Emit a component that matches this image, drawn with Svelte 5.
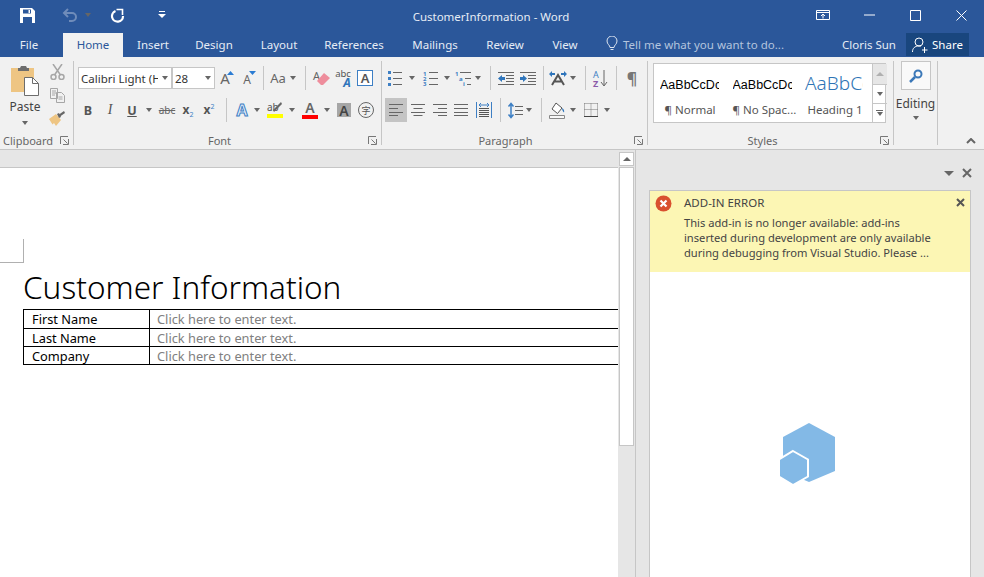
<script>
	const tabs = [
		{ label: 'Insert', cls: 'w60' },
		{ label: 'Design', cls: 'w62' },
		{ label: 'Layout', cls: 'w68' },
		{ label: 'References', cls: 'w82' },
		{ label: 'Mailings', cls: 'w80' },
		{ label: 'Review', cls: 'w60' },
		{ label: 'View', cls: 'w60' }
	];
	const rows = ['First Name', 'Last Name', 'Company'];
</script>

{#snippet caret()}<span class="caret"></span>{/snippet}
{#snippet launcher()}
	<svg class="launcher" width="9" height="9" viewBox="0 0 9 9"><path d="M.5 8V.5H8M8.500 8.500H3M8.500 8.500V3M3.500 3.500L7.500 7.500" fill="none" stroke="#777"/></svg>
{/snippet}
{#snippet lines(kind)}
	<svg width="16" height="14" viewBox="0 0 16 14" stroke="#666" fill="none">
		{#if kind === 'left'}<path d="M1 1.500h14M1 5.500h9M1 9.500h14M1 12.500h9"/>
		{:else if kind === 'center'}<path d="M1 1.500h14M3.500 5.500h9M1 9.500h14M3.500 12.500h9"/>
		{:else if kind === 'right'}<path d="M1 1.500h14M6 5.500h9M1 9.500h14M6 12.500h9"/>
		{:else}<path d="M1 1.500h14M1 5.500h14M1 9.500h14M1 12.500h14"/>{/if}
	</svg>
{/snippet}

<div class="app">
	<header class="titlebar">
		<div class="qat">
			<span class="qbtn w54">
				<svg width="15" height="15" viewBox="0 0 15 15"><path d="M0 0h12l3 3v12H0z" fill="#fff"/><path d="M3 1.500h8v4H3zM3 9h9v6H3z" fill="#2b579a"/><path d="M8.500 2h1.500v3H8.500z" fill="#fff"/></svg>
			</span>
			<span class="qbtn w32">
				<svg width="16" height="14" viewBox="0 0 16 14" fill="none" stroke="#6f8cba" stroke-width="2"><path d="M6 1L2 5l4 4M2 5h8a4 4 0 0 1 0 8H7"/></svg>
			</span>
			<span class="qbtn w4"><span class="caret dimcaret"></span></span>
			<span class="qbtn w54">
				<svg width="15" height="15" viewBox="0 0 15 15" fill="none" stroke="#fff"><path d="M5.500 3A5.500 5.500 0 1 0 13 8" stroke-width="2.200"/><path d="M6.500 1.500H12.500V7" stroke-width="1.600"/></svg>
			</span>
			<span class="qbtn w36">
				<svg width="8" height="8" viewBox="0 0 8 8" fill="#fff"><path d="M1 0h6v1H1zM0 3h8L4 7z"/></svg>
			</span>
		</div>
		<div class="doc-title">CustomerInformation - Word</div>
		<div class="winbtns">
			<span class="wbtn">
				<svg width="14" height="10" viewBox="0 0 14 10" fill="none" stroke="#fff"><path d="M.5.500h13v9H.5zM.5 2.500h13M7 8.500V4M5 6l2-2 2 2"/></svg>
			</span>
			<span class="wbtn"><svg width="11" height="2" viewBox="0 0 11 2"><path d="M0 1h11" stroke="#fff"/></svg></span>
			<span class="wbtn"><svg width="11" height="11" viewBox="0 0 11 11"><path d="M.5.500h10v10H.5z" fill="none" stroke="#fff"/></svg></span>
			<span class="wbtn"><svg width="11" height="11" viewBox="0 0 11 11"><path d="M.5.500l10 10M10.500.500l-10 10" stroke="#fff"/></svg></span>
		</div>
	</header>

	<nav class="tabbar">
		<span class="tab w58">File</span>
		<span class="tab home">Home</span>
		{#each tabs as t}
			<span class="tab {t.cls}">{t.label}</span>
		{/each}
		<span class="tell">
			<svg width="12" height="16" viewBox="0 0 12 16" fill="none" stroke="#dde5f0"><path d="M4 11.500C4 9 1 8.500 1 5a5 5 0 0 1 10 0c0 3.500-3 4-3 6.500zM4.500 13.500h3"/></svg>
			Tell me what you want to do...
		</span>
		<span class="user">Cloris Sun</span>
		<span class="share">
			<svg width="16" height="16" viewBox="0 0 16 16" fill="none" stroke="#fff"><circle cx="7" cy="5" r="4"/><path d="M.5 15c0-4 2.500-6 6.500-6 1 0 1.500.1 2 .3M10 13h5.500M12.500 10v6"/></svg>
			Share
		</span>
	</nav>

	<section class="ribbon">
		<div class="group g-clip">
			<div class="clip-body">
				<div class="paste">
					<svg width="30" height="31" viewBox="0 0 30 31">
						<path d="M1 3h23v24H1z" fill="#eec583"/>
						<path d="M8 3h2l1-2h5l1 2h2v3H8z" fill="#6d6d6d"/>
						<path d="M14.500 12.500h8l6 6v12h-14z" fill="#fff" stroke="#6d6d6d"/>
						<path d="M22.500 12.500v6h6" fill="none" stroke="#6d6d6d"/>
					</svg>
					<span>Paste</span>
					{@render caret()}
				</div>
				<div class="clip-tools">
					<svg width="15" height="16" viewBox="0 0 15 16" fill="none" stroke="#a6a6a6" stroke-width="1.500"><path d="M3 0l7.500 11M12 0L4.500 11"/><circle cx="3.500" cy="13" r="2.500"/><circle cx="11.500" cy="13" r="2.500"/></svg>
					<svg width="15" height="15" viewBox="0 0 15 15" fill="#f1f1f1" stroke="#a6a6a6"><path d="M.5.500h7v10h-7zM6.500 4.500h5l3 3v7h-8z"/><path d="M2 3h4M2 5h4M2 7h3M8.500 9h4M8.500 11h4" fill="none"/></svg>
					<svg width="16" height="15" viewBox="0 0 16 15"><path d="M0 8l7-5 5 6-5 6-2-3-1.500 1.500z" fill="#eec583"/><path d="M8 3l2-1 2 4-2 1z" fill="#666"/><path d="M10 3.500L15 0l1 2-5 3.500z" fill="#666"/></svg>
				</div>
			</div>
			<div class="glabel left">Clipboard {@render launcher()}</div>
		</div>

		<div class="group g-font">
			<div class="rrow r1 p4">
				<span class="combo w94"><span class="ctext">Calibri Light (H</span>{@render caret()}</span>
				<span class="combo w43"><span class="ctext">28</span>{@render caret()}</span>
				<span class="c w22">
					<span class="ga big">A</span>
					<svg class="sup" width="7" height="4" viewBox="0 0 7 4"><path d="M0 4h7L3.500 0z" fill="#2b7cd3"/></svg>
				</span>
				<span class="c w22">
					<span class="ga small">A</span>
					<svg class="sup" width="7" height="4" viewBox="0 0 7 4"><path d="M0 0h7L3.500 4z" fill="#2b7cd3"/></svg>
				</span>
				<span class="c w8"><span class="sep"></span></span>
				<span class="c w22"><span class="ga aa">Aa</span></span>
				<span class="c w8">{@render caret()}</span>
				<span class="c w16"><span class="sep"></span></span>
				<span class="c w18">
					<svg width="18" height="16" viewBox="0 0 18 16"><text x="0" y="10" font-size="11" font-family="Noto Sans" fill="#666">A</text><path d="M4 11l7-8 6 5-7 7H8z" fill="#ee8d9c"/></svg>
				</span>
				<span class="c w26">
					<span class="abc"><small>abc</small><b>A</b></span>
				</span>
				<span class="c w16"><span class="boxa">A</span></span>
			</div>
			<div class="rrow r2 p3">
				<span class="c w22"><b class="fmt">B</b></span>
				<span class="c w22"><i class="fmt it">I</i></span>
				<span class="c w22"><u class="fmt">U</u></span>
				<span class="c w12">{@render caret()}</span>
				<span class="c w24"><s class="strike">abc</s></span>
				<span class="c w18"><span class="scr"><b>x</b><sub>2</sub></span></span>
				<span class="c w24"><span class="scr"><b>x</b><sup>2</sup></span></span>
				<span class="c w10"><span class="sep"></span></span>
				<span class="c w22"><span class="effect">A</span></span>
				<span class="c w8">{@render caret()}</span>
				<span class="c w28">
					<span class="hl"><svg width="16" height="12" viewBox="0 0 16 12"><text x="0" y="9" font-size="10" font-family="Noto Sans" fill="#555">ab</text><path d="M7 10l8-8-1-2-8 8z" fill="#666"/></svg><span class="bar yellow"></span></span>
				</span>
				<span class="c w6">{@render caret()}</span>
				<span class="c w30">
					<span class="hl"><span class="ga col">A</span><span class="bar red"></span></span>
				</span>
				<span class="c w4">{@render caret()}</span>
				<span class="c w30"><span class="shaded">A</span></span>
				<span class="c w14">
					<span class="circ">字</span>
				</span>
			</div>
			<div class="glabel shift8">Font {@render launcher()}</div>
		</div>

		<div class="group g-para">
			<div class="rrow r1">
				<span class="c w26">
					<svg width="14" height="15" viewBox="0 0 14 15"><path d="M0 0h3v3H0zM0 6h3v3H0zM0 12h3v3H0z" fill="#3d7fc4"/><path d="M5 1.500h9M5 7.500h9M5 13.500h9" stroke="#666"/></svg>
				</span>
				<span class="c w8">{@render caret()}</span>
				<span class="c w28">
					<svg width="15" height="15" viewBox="0 0 15 15"><text x="0" y="5" font-size="6" font-weight="700" font-family="Noto Sans" fill="#3d7fc4">1</text><text x="0" y="10" font-size="6" font-weight="700" font-family="Noto Sans" fill="#3d7fc4">2</text><text x="0" y="15" font-size="6" font-weight="700" font-family="Noto Sans" fill="#3d7fc4">3</text><path d="M6 1.500h9M6 7.500h9M6 13.500h9" stroke="#666"/></svg>
				</span>
				<span class="c w6">{@render caret()}</span>
				<span class="c w26">
					<svg width="16" height="15" viewBox="0 0 16 15"><text x="0" y="5" font-size="6" font-weight="700" font-family="Noto Sans" fill="#3d7fc4">1</text><text x="4" y="10" font-size="6" font-weight="700" font-family="Noto Sans" fill="#3d7fc4">a</text><text x="8" y="15" font-size="6" font-weight="700" font-family="Noto Sans" fill="#3d7fc4">i</text><path d="M5 1.500h11M10 7.500h6M12 13.500h4" stroke="#666"/></svg>
				</span>
				<span class="c w4">{@render caret()}</span>
				<span class="c w20"><span class="sep"></span></span>
				<span class="c w12">
					<svg width="16" height="15" viewBox="0 0 16 15"><path d="M0 1.500h16M8 4.500h8M8 7.500h8M8 10.500h8M0 13.500h16" stroke="#666"/><path d="M0 7.500l4-3.500v2h3v3H4v2z" fill="#2f75bb"/></svg>
				</span>
				<span class="c w22 ml5">
					<svg width="16" height="15" viewBox="0 0 16 15"><path d="M0 1.500h16M8 4.500h8M8 7.500h8M8 10.500h8M0 13.500h16" stroke="#666"/><path d="M7 7.500L3 4v2H0v3h3v2z" fill="#2f75bb"/></svg>
				</span>
				<span class="c w8"><span class="sep"></span></span>
				<span class="c w22">
					<svg width="18" height="15" viewBox="0 0 18 15" fill="none"><path d="M3 14L9 4l6 10M5 10.500h8" stroke="#555" stroke-width="2"/><path d="M0 3l3-3v2h3v2H3v2zM18 3l-3-3v2h-3v2h3v2z" fill="#2f75bb"/></svg>
				</span>
				<span class="c w8">{@render caret()}</span>
				<span class="c w16"><span class="sep"></span></span>
				<span class="c w14">
					<svg width="14" height="17" viewBox="0 0 14 17"><text x="0" y="7.500" font-size="9" font-family="Noto Sans" fill="#3d7fc4">A</text><text x="0" y="16.500" font-size="9" font-weight="700" font-family="Noto Sans" fill="#8a5aa8">Z</text><path d="M11 0v15M8 12l3 4 3-4" fill="none" stroke="#666"/></svg>
				</span>
				<span class="c w18"><span class="sep"></span></span>
				<span class="c w14"><span class="pil">¶</span></span>
			</div>
			<div class="rrow r2 p3">
				<span class="c w22 active">{@render lines('left')}</span>
				<span class="c w22">{@render lines('center')}</span>
				<span class="c w22">{@render lines('right')}</span>
				<span class="c w20">{@render lines('justify')}</span>
				<span class="c w26">
					<svg width="16" height="16" viewBox="0 0 16 16" fill="none"><path d="M.5 0v16M15.500 0v16" stroke="#3d7fc4"/><path d="M3 6.500h10M3 8.500h10M3 10.500h10M3 12.500h10M3 14.500h10" stroke="#555"/><path d="M3 3h10M5 1L3 3l2 2M11 1l2 2-2 2" stroke="#3d7fc4"/></svg>
				</span>
				<span class="c w6"><span class="sep"></span></span>
				<span class="c w24">
					<svg width="15" height="17" viewBox="0 0 15 17" fill="none"><path d="M3 2v13M.5 4.500L3 1.500l2.500 3M.5 12.500L3 15.500l2.500-3" stroke="#3d7fc4" stroke-width="1.500"/><path d="M7 4.500h8M7 8.500h8M7 12.500h8" stroke="#666"/></svg>
				</span>
				<span class="c w4">{@render caret()}</span>
				<span class="c w20"><span class="sep"></span></span>
				<span class="c w12">
					<svg width="16" height="17" viewBox="0 0 16 17"><path d="M3 7l4-6 6 5-4.500 5.500z" fill="#fff" stroke="#555"/><path d="M13 6c2 1 2.500 3 2 4.500-1-1-2-2-2-4.500z" fill="#2f75bb"/><path d="M.5 13.500h15v3H.5z" fill="#f8f8f8" stroke="#888"/></svg>
				</span>
				<span class="c w20">{@render caret()}</span>
				<span class="c w16">
					<svg width="14" height="14" viewBox="0 0 14 14" fill="none" stroke="#777" stroke-dasharray="1 1"><path d="M.5.500h13M.5 6.500h13M.5.500v13M7 .5v13M13.500.500v13"/><path d="M0 13.500h14" stroke="#444" stroke-dasharray="none"/></svg>
				</span>
				<span class="c w16">{@render caret()}</span>
			</div>
			<div class="glabel shift9">Paragraph {@render launcher()}</div>
		</div>

		<div class="group g-styles">
			<div class="gallery">
				<div class="style">
					<span class="sample">AaBbCcDc</span>
					<span class="sname">¶ Normal</span>
				</div>
				<div class="style">
					<span class="sample">AaBbCcDc</span>
					<span class="sname">¶ No Spac...</span>
				</div>
				<div class="style">
					<span class="sample h1">AaBbCc</span>
					<span class="sname">Heading 1</span>
				</div>
				<div class="gscroll">
					<span class="up"><span class="tri-up"></span></span>
					<span>{@render caret()}</span>
					<span class="more"><i></i>{@render caret()}</span>
				</div>
			</div>
			<div class="glabel shift8">Styles {@render launcher()}</div>
		</div>

		<div class="group g-edit">
			<span class="editbtn">
				<svg width="14" height="14" viewBox="0 0 14 14" fill="none" stroke="#3b78b8"><circle cx="9" cy="5" r="3.500" stroke-width="2"/><path d="M6 8l-5 5" stroke-width="2.500"/></svg>
			</span>
			<span class="edittxt">Editing</span>
			{@render caret()}
		</div>
		<div class="collapse">
			<svg width="10" height="6" viewBox="0 0 10 6" fill="none" stroke="#666" stroke-width="2"><path d="M1 5l4-4 4 4"/></svg>
		</div>
	</section>

	<main class="work">
		<div class="docside">
			<div class="ruler"></div>
			<div class="page">
				<div class="cropmark"></div>
				<h1>Customer Information</h1>
				<table>
					<tbody>
						{#each rows as r, i}
							<tr class:first={i === 0}>
								<td class="lbl">{r}</td>
								<td class="ph">Click here to enter text.</td>
							</tr>
						{/each}
					</tbody>
				</table>
			</div>
		</div>

		<div class="vscroll">
			<span class="sbtn"><span class="tri-up dark"></span></span>
			<span class="thumb"></span>
		</div>

		<aside class="pane">
			<div class="panehead">
				<span class="caret pc"></span>
				<svg width="10" height="10" viewBox="0 0 10 10"><path d="M1 1l8 8M9 1l-8 8" stroke="#666" stroke-width="2"/></svg>
			</div>
			<div class="card">
				<div class="error">
					<svg class="erricon" width="17" height="17" viewBox="0 0 17 17"><circle cx="8.500" cy="8.500" r="8" fill="#d9502e"/><path d="M5.500 5.500l6 6M11.500 5.500l-6 6" stroke="#fff" stroke-width="2.200"/></svg>
					<div class="errtext">
						<div class="errtitle">ADD-IN ERROR</div>
						<div class="errbody">This add-in is no longer available: add-ins inserted during development are only available during debugging from Visual Studio. Please ...</div>
					</div>
					<svg class="errclose" width="9" height="9" viewBox="0 0 9 9"><path d="M1 1l7 7M8 1L1 8" stroke="#555" stroke-width="2"/></svg>
				</div>
				<div class="logo">
					<svg width="56" height="62" viewBox="0 0 56 62">
						<path d="M30 0l26 14v34l-26 11-26-11V14z" fill="#83b9e6"/>
						<path d="M14 28l15 8.500v17L14 62 0 53.500v-17z" fill="#83b9e6" stroke="#fff" stroke-width="2"/>
					</svg>
				</div>
			</div>
		</aside>
	</main>
</div>

<style>
	:global(body) {
		margin: 0;
		overflow: hidden;
	}
	.app {
		width: 984px;
		height: 577px;
		display: flex;
		flex-direction: column;
		overflow: hidden;
		font-family: "Noto Sans", "Open Sans", sans-serif;
		font-size: 12px;
		color: #444;
		background: #e6e6e6;
	}

	/* title bar */
	.titlebar {
		height: 33px;
		flex: none;
		background: #2b579a;
		color: #fff;
		display: flex;
		align-items: center;
		position: relative;
	}
	.qat {
		display: flex;
		align-items: center;
		padding-bottom: 3px;
	}
	.qbtn {
		display: flex;
		justify-content: center;
		align-items: center;
		flex: none;
	}
	.w54 { width: 54px; }
	.w32 { width: 32px; }
	.w36 { width: 36px; }
	.dimcaret { border-top-color: #5f7fb0; }
	.doc-title {
		flex: 1;
		text-align: center;
		color: #e6ecf5;
		padding-left: 26px;
		font-size: 11.500px;
		margin-left: -24px;
	}
	.winbtns {
		display: flex;
		align-items: center;
		padding-bottom: 3px;
	}
	.wbtn {
		width: 46px;
		display: flex;
		justify-content: center;
	}

	/* tabs */
	.tabbar {
		height: 24px;
		flex: none;
		background: #2b579a;
		display: flex;
		align-items: stretch;
		color: #e6ecf5;
	}
	.tab {
		display: flex;
		justify-content: center;
		align-items: center;
		flex: none;
		font-size: 11.500px;
		padding-bottom: 2px;
		box-sizing: border-box;
	}
	.w58 { width: 58px; }
	.w60 { width: 60px; }
	.w62 { width: 62px; }
	.w68 { width: 68px; }
	.w82 { width: 82px; }
	.w80 { width: 80px; }
	.home {
		width: 60px;
		margin-left: 5px;
		background: #f1f1f1;
		color: #2b579a;
	}
	.tell {
		display: flex;
		align-items: center;
		gap: 5px;
		margin-left: 11px;
		width: 236px;
		color: #b4c5de;
		font-size: 11.500px;
		flex: none;
		padding-bottom: 2px;
		box-sizing: border-box;
	}
	.user {
		display: flex;
		align-items: center;
		width: 64px;
		flex: none;
		font-size: 11.500px;
		padding-bottom: 2px;
		box-sizing: border-box;
	}
	.share {
		width: 63px;
		height: 23px;
		flex: none;
		background: #19467e;
		color: #fff;
		display: flex;
		align-items: center;
		justify-content: center;
		gap: 4px;
		font-size: 11.500px;
	}

	/* ribbon */
	.ribbon {
		height: 93px;
		flex: none;
		display: flex;
		background: #f1f1f1;
		border-bottom: 1px solid #c6c6c6;
		box-sizing: border-box;
		position: relative;
	}
	.group {
		position: relative;
		box-sizing: content-box;
		height: 84px;
		margin-top: 4px;
		border-right: 1px solid #c6c6c6;
		flex: none;
		display: flex;
		flex-direction: column;
	}
	.g-clip { width: 73px; }
	.g-font { width: 307px; }
	.g-para { width: 265px; }
	.g-styles { width: 245px; }
	.g-edit {
		width: 43px;
		align-items: center;
	}
	.glabel {
		position: absolute;
		left: 0;
		right: 0;
		bottom: -3px;
		text-align: center;
		font-size: 11px;
		color: #666;
		line-height: 14px;
	}
	.shift8 { padding-right: 16px; }
	.shift9 { padding-right: 18px; }
	.glabel.left {
		text-align: left;
		padding-left: 3px;
	}
	.launcher {
		position: absolute;
		right: 4px;
		bottom: 3px;
	}
	.clip-body {
		display: flex;
	}
	.paste {
		width: 50px;
		display: flex;
		flex-direction: column;
		align-items: center;
		padding-top: 4px;
		box-sizing: border-box;
	}
	.paste span:nth-child(2) {
		margin-top: 2px;
		line-height: 18px;
	}
	.paste :global(.caret) {
		margin-top: 5px;
	}
	.clip-tools {
		display: flex;
		flex-direction: column;
		align-items: center;
		gap: 8px;
		width: 14px;
		padding-top: 3px;
	}
	.rrow {
		display: flex;
		align-items: center;
		height: 24px;
	}
	.r1 { margin-top: 5px; }
	.r2 { margin-top: 8px; }
	.p3 { padding-left: 3px; }
	.p4 { padding-left: 4px; }
	.c {
		display: flex;
		align-items: center;
		justify-content: center;
		flex: none;
		height: 24px;
		position: relative;
	}
	.w4 { width: 4px; }
	.w6 { width: 6px; }
	.w8 { width: 8px; }
	.w10 { width: 10px; }
	.w12 { width: 12px; }
	.w14 { width: 14px; }
	.w16 { width: 16px; }
	.w18 { width: 18px; }
	.w20 { width: 20px; }
	.w22 { width: 22px; }
	.w24 { width: 24px; }
	.w26 { width: 26px; }
	.w28 { width: 28px; }
	.w30 { width: 30px; }
	.ml5 { margin-left: 5px; }
	.w94 { width: 94px; }
	.w43 { width: 43px; }
	.c svg {
		flex: none;
		overflow: visible;
	}
	.caret {
		display: inline-block;
		width: 0;
		height: 0;
		border-left: 3.500px solid transparent;
		border-right: 3.500px solid transparent;
		border-top: 4px solid #666;
		flex: none;
	}
	.sep {
		display: block;
		width: 1px;
		height: 24px;
		background: #c6c6c6;
		flex: none;
	}
	.combo {
		display: flex;
		align-items: center;
		justify-content: space-between;
		box-sizing: border-box;
		height: 22px;
		border: 1px solid #c6c6c6;
		background: #fff;
		padding: 0 3px 0 2px;
		color: #333;
		flex: none;
		font-size: 11.500px;
		white-space: nowrap;
		overflow: hidden;
	}
	.ctext {
		overflow: hidden;
		max-width: 77px;
	}
	.ga {
		color: #666;
		line-height: 1;
	}
	.big { font-size: 15px; margin-right: 2px; }
	.small { font-size: 12px; margin-top: 3px; margin-right: 2px; }
	.aa { font-size: 13px; }
	.col { font-size: 14px; font-weight: 600; }
	.sup {
		position: absolute;
		right: 3px;
		top: 5px;
	}
	.abc {
		display: flex;
		flex-direction: column;
		align-items: flex-end;
		line-height: 9px;
		margin-left: -2px;
	}
	.abc small {
		font-size: 9.500px;
		color: #555;
	}
	.abc b {
		font-size: 12px;
		font-style: italic;
		color: #2f75bb;
	}
	.boxa {
		width: 14px;
		height: 14px;
		border: 1px solid #3d7fc4;
		background: #fff;
		display: flex;
		justify-content: center;
		align-items: center;
		font-size: 13px;
		color: #555;
		flex: none;
		font-weight: 600;
	}
	.fmt {
		color: #555;
		font-size: 12.500px;
		font-weight: 700;
	}
	.it {
		font-family: "Liberation Serif", serif;
		font-weight: 400;
		font-size: 14px;
	}
	.strike {
		font-size: 10px;
		color: #666;
	}
	.scr {
		color: #555;
		font-size: 12px;
		line-height: 1;
	}
	.scr sub, .scr sup {
		font-size: 7px;
		color: #3d7fc4;
		line-height: 0;
	}
	.effect {
		font-size: 16px;
		font-weight: 700;
		color: #e8f0fa;
		-webkit-text-stroke: 1px #3d7fc4;
		line-height: 1;
	}
	.hl {
		display: flex;
		flex-direction: column;
		align-items: center;
		width: 16px;
		line-height: 1;
	}
	.bar {
		display: block;
		width: 16px;
		height: 4px;
		flex: none;
	}
	.yellow { background: #ffff00; }
	.red { background: #f00; }
	.shaded {
		width: 14px;
		height: 14px;
		background: #a6a6a6;
		display: flex;
		align-items: center;
		justify-content: center;
		font-size: 14px;
		font-weight: 600;
		color: #444;
		flex: none;
	}
	.circ {
		width: 14px;
		height: 14px;
		border: 1px solid #666;
		border-radius: 50%;
		display: flex;
		justify-content: center;
		align-items: center;
		font: 9px "Noto Sans CJK SC", sans-serif;
		color: #555;
		flex: none;
	}
	.pil {
		font-size: 16px;
		font-weight: 700;
		color: #777;
		line-height: 1;
	}
	.active { background: #c4c4c4; }
	.gallery {
		margin: 2px 0 0 5px;
		width: 233px;
		height: 60px;
		box-sizing: border-box;
		border: 1px solid #c6c6c6;
		background: #fff;
		display: flex;
	}
	.style {
		width: 72.500px;
		flex: none;
		padding-left: 6px;
		box-sizing: border-box;
		display: flex;
		flex-direction: column;
		overflow: hidden;
	}
	.sample {
		width: 59px;
		overflow: hidden;
		white-space: nowrap;
		font-family: "Liberation Sans", sans-serif;
		font-size: 12.500px;
		color: #000;
		line-height: 17px;
		margin-top: 13px;
	}
	.sample.h1 {
		width: 58px;
		font-family: "Noto Sans", sans-serif;
		font-size: 19px;
		font-weight: 300;
		color: #2e74b5;
		line-height: 22px;
		margin-top: 8px;
	}
	.sname {
		margin-top: 8px;
		color: #555;
		white-space: nowrap;
		font-size: 11.500px;
		text-align: center;
		width: 60px;
	}
	.gscroll {
		margin-left: auto;
		width: 14px;
		border-left: 1px solid #c6c6c6;
		display: flex;
		flex-direction: column;
		flex: none;
	}
	.gscroll > span {
		flex: 1;
		display: flex;
		flex-direction: column;
		align-items: center;
		justify-content: center;
		border-top: 1px solid #c6c6c6;
	}
	.gscroll > .up {
		border-top: 0;
		background: #e6e6e6;
		flex: 1.150;
	}
	.more i {
		display: block;
		width: 7px;
		height: 1px;
		background: #666;
		margin-bottom: 1px;
	}
	.tri-up {
		width: 0;
		height: 0;
		border-left: 4px solid transparent;
		border-right: 4px solid transparent;
		border-bottom: 4px solid #b0b0b0;
	}
	.tri-up.dark { border-bottom-color: #666; }
	.editbtn {
		width: 30px;
		height: 29px;
		box-sizing: border-box;
		border: 1px solid #c6c6c6;
		background: #f9f9f9;
		display: flex;
		align-items: center;
		justify-content: center;
	}
	.edittxt {
		line-height: 16px;
		margin-top: 6px;
	}
	.g-edit .caret { margin-top: 4px; }
	.collapse {
		flex: 1;
		display: flex;
		justify-content: flex-end;
		align-items: flex-end;
		padding: 0 8px 5px 0;
	}

	/* document */
	.work {
		flex: 1;
		display: flex;
		min-height: 0;
	}
	.docside {
		width: 618px;
		flex: none;
		display: flex;
		flex-direction: column;
		overflow: hidden;
	}
	.ruler {
		height: 17px;
		background: #e6e6e6;
		border-bottom: 1px solid #c6c6c6;
		flex: none;
	}
	.page {
		flex: 1;
		background: #fff;
		padding: 71px 0 0 23px;
		color: #000;
		min-width: 0;
	}
	.cropmark {
		width: 24px;
		height: 24px;
		margin-left: -23px;
		box-sizing: border-box;
		border-right: 1px solid #b0b0b0;
		border-bottom: 1px solid #b0b0b0;
	}
	h1 {
		margin: 1px 0 0;
		font-weight: 300;
		font-size: 31.500px;
		line-height: 45px;
		color: #000;
		white-space: nowrap;
	}
	table {
		border-collapse: collapse;
		width: 640px;
		table-layout: fixed;
	}
	td {
		border: 1px solid #000;
		height: 17px;
		padding: 0 0 0 8px;
		font-size: 12.800px;
		line-height: 16px;
		white-space: nowrap;
	}
	.first td {
		height: 18px;
	}
	.lbl {
		width: 117px;
	}
	.ph {
		color: #808080;
		padding-left: 7px;
	}
	.vscroll {
		width: 18px;
		flex: none;
		background: #e6e6e6;
		display: flex;
		flex-direction: column;
		align-items: center;
		box-sizing: border-box;
		padding-top: 2px;
		border-right: 1px solid #c6c6c6;
	}
	.sbtn {
		width: 15px;
		height: 14px;
		box-sizing: border-box;
		background: #fff;
		border: 1px solid #c6c6c6;
		display: flex;
		align-items: center;
		justify-content: center;
	}
	.thumb {
		width: 15px;
		height: 279px;
		box-sizing: border-box;
		background: #fff;
		border: 1px solid #c6c6c6;
		margin-top: 1px;
	}
	.pane {
		flex: 1;
		background: #e6e6e6;
		display: flex;
		flex-direction: column;
		padding: 0 13px;
		min-width: 0;
	}
	.panehead {
		height: 40px;
		flex: none;
		display: flex;
		justify-content: flex-end;
		align-items: center;
		gap: 8px;
		margin-right: -1px;
		box-sizing: border-box;
		padding-top: 6px;
	}
	.pc {
		border-left-width: 5px;
		border-right-width: 5px;
		border-top-width: 5px;
	}
	.card {
		flex: 1;
		background: #fff;
		border: 1px solid #c6c6c6;
		border-bottom: 0;
		display: flex;
		flex-direction: column;
	}
	.error {
		height: 81px;
		flex: none;
		background: #fcf6b4;
		display: flex;
		align-items: flex-start;
		box-sizing: border-box;
		padding: 4px 0 0 5px;
		position: relative;
		font-size: 11.500px;
		line-height: 15px;
		color: #444;
	}
	.erricon { flex: none; }
	.errtext {
		margin-left: 12px;
		width: 252px;
	}
	.errtitle {
		margin-bottom: 4px;
		line-height: 16px;
	}
	.errbody {
		font-size: 11.150px;
	}
	.errclose {
		position: absolute;
		right: 5px;
		top: 7px;
	}
	.logo {
		flex: none;
		display: flex;
		justify-content: center;
		padding-top: 151px;
		padding-right: 6px;
	}
</style>
